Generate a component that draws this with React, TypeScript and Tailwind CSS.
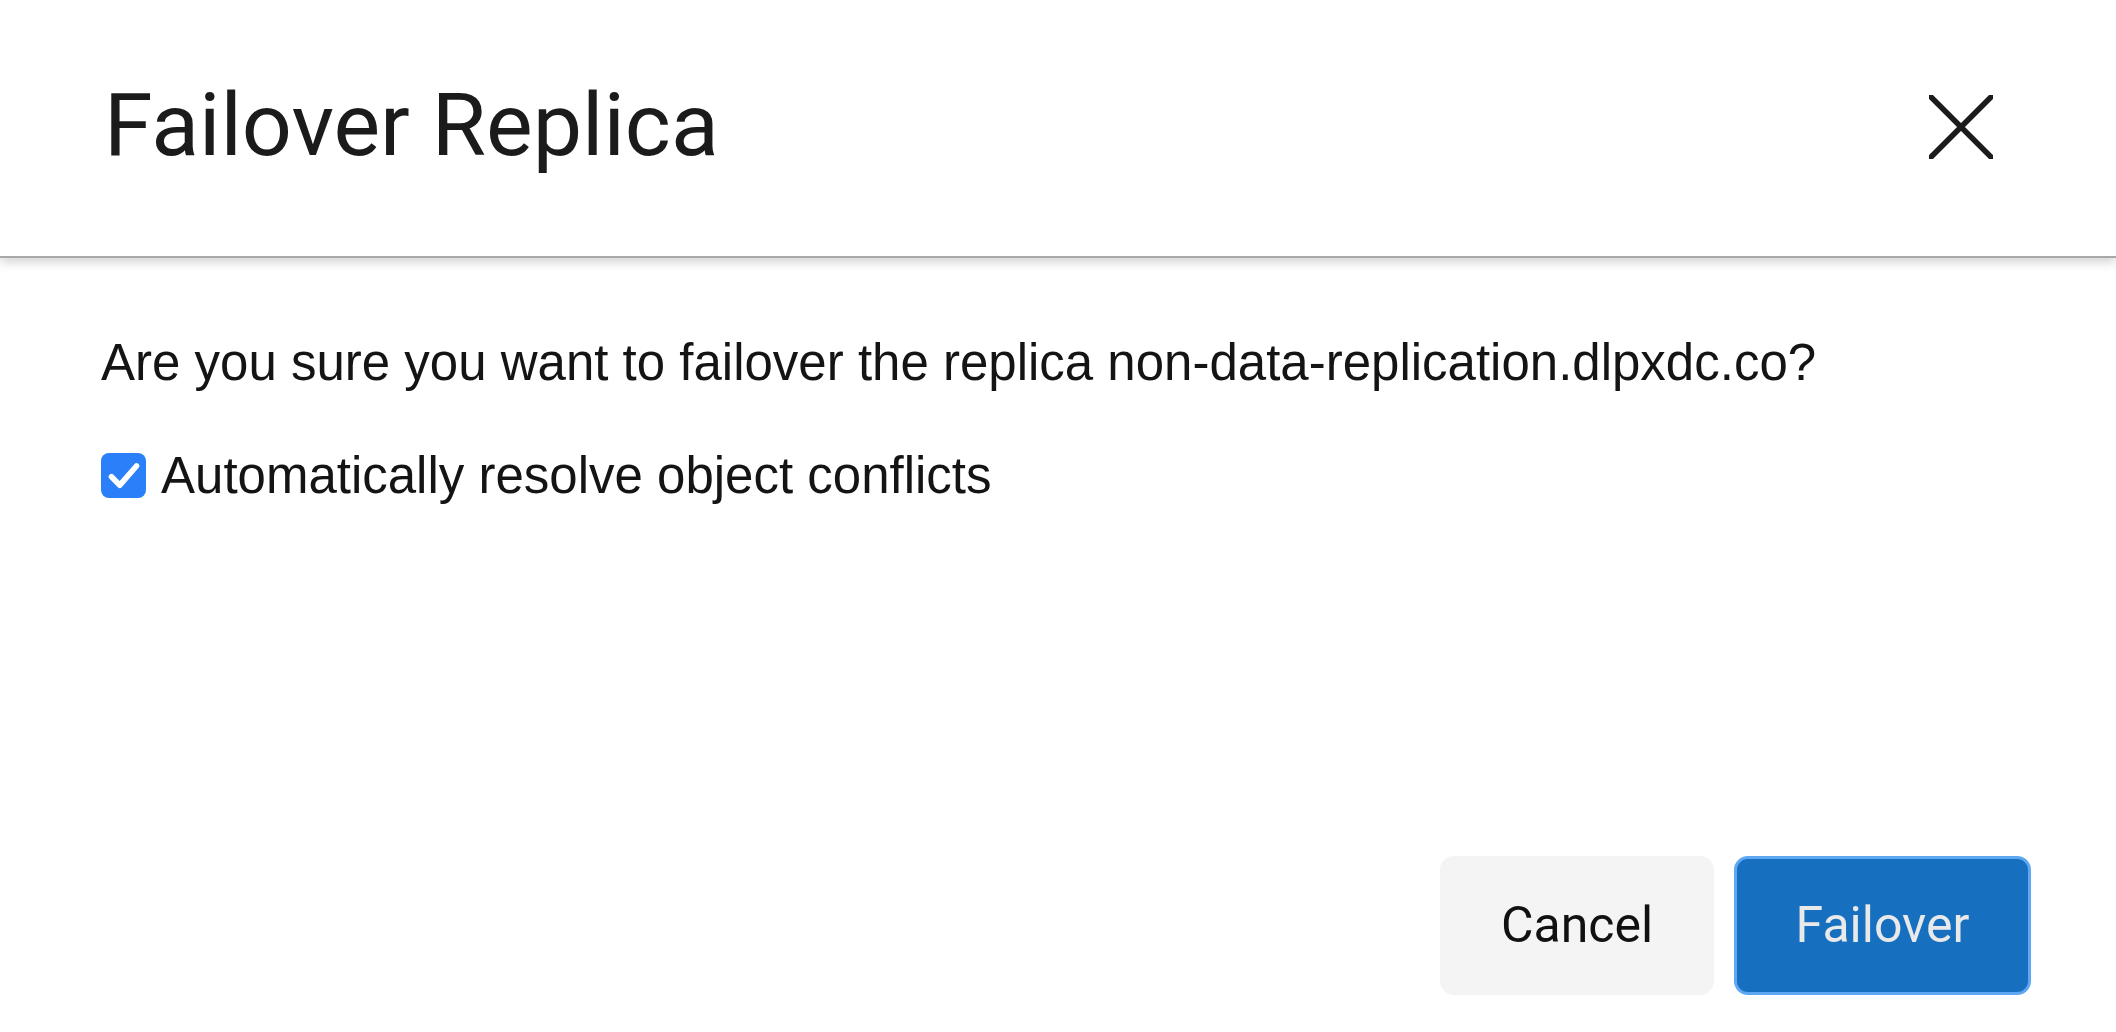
const App = () => {
  return (
    <div className="flex h-screen w-full flex-col overflow-hidden bg-white">
      {/* Header */}
      <div className="relative z-10 flex h-[258px] shrink-0 items-center justify-between border-b-2 border-[#a8a8a8] pl-[104px] pr-[123px] shadow-[0_4px_10px_rgba(0,0,0,0.18)]">
        <h1 className="pb-[6px] font-['Roboto',sans-serif] text-[88px] leading-none text-[#1b1b1b]">
          Failover Replica
        </h1>
        <button className="mb-[2px] flex h-[64px] w-[64px] items-center justify-center text-[#1b1b1b]">
          <svg viewBox="0 0 64 64" className="h-[64px] w-[64px]" fill="none">
            <path d="M2 2 L62 62 M62 2 L2 62" stroke="currentColor" strokeWidth={5.5} strokeLinecap="round" />
          </svg>
        </button>
      </div>

      {/* Body */}
      <div className="flex flex-1 flex-col gap-[62px] pl-[101px] pt-[79px] font-['Liberation_Sans',Arial,sans-serif] text-[#141414]">
        <p className="text-[51px] leading-none">
          Are you sure you want to failover the replica non-data-replication.dlpxdc.co?
        </p>
        <label className="flex items-center gap-[15px] text-[51px] leading-none">
          <span className="flex h-[45px] w-[45px] shrink-0 items-center justify-center rounded-[8px] bg-[#2b7ff8]">
            <svg viewBox="0 0 24 24" className="h-[40px] w-[40px]" fill="none">
              <path
                d="M4.5 12.5 L9.5 17.5 L19.5 6"
                stroke="white"
                strokeWidth={3.4}
                strokeLinecap="round"
                strokeLinejoin="round"
              />
            </svg>
          </span>
          Automatically resolve object conflicts
        </label>
      </div>

      {/* Footer */}
      <div className="flex justify-end gap-[20px] pb-[37px] pr-[85px] font-['Roboto',sans-serif] text-[50px]">
        <button className="flex h-[139px] w-[274px] items-center justify-center rounded-[14px] bg-[#f4f4f4] text-[#111]">
          Cancel
        </button>
        <button className="flex h-[139px] w-[297px] items-center justify-center rounded-[14px] border-[3px] border-[#5ea7f2] bg-[#1670bf] text-[#e9e9e9]">
          Failover
        </button>
      </div>
    </div>
  );
};

export default App;
